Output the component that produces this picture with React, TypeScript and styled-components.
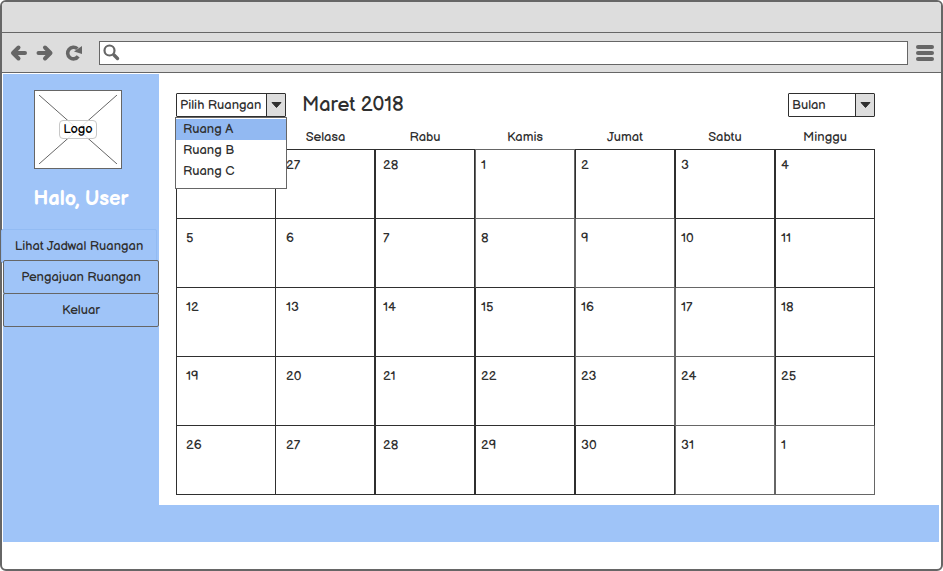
import React, { useState } from "react";
import styled, { createGlobalStyle } from "styled-components";

const ink = "#2f2f2f";
const grey = "#666666";
const blue = "#9fc4f8";
const chrome = "#dddddd";

const GlobalStyle = createGlobalStyle`
  *, *::before, *::after { box-sizing: border-box; }
  body {
    margin: 0;
    background: #fff;
    color: ${ink};
    font-family: "Balsamiq Sans", "Open Sans", sans-serif;
    font-size: 13px;
    line-height: 20px;
  }
  button, input, select { font: inherit; color: inherit; }
`;

const Frame = styled.div`
  display: flex;
  flex-direction: column;
  min-height: 100vh;
  border: 2px solid ${grey};
  border-radius: 6px;
  background: #fff;
`;

const TitleBar = styled.div`
  height: 31px;
  background: ${chrome};
  border-bottom: 1px solid ${grey};
  border-radius: 4px 4px 0 0;
`;

const Toolbar = styled.div`
  display: flex;
  align-items: center;
  height: 40px;
  padding: 0 7px 0 4px;
  background: ${chrome};
  border-bottom: 1px solid ${grey};
`;

const ToolButton = styled.button<{ $width: number }>`
  display: flex;
  align-items: center;
  justify-content: center;
  width: ${(p) => p.$width}px;
  height: 24px;
  padding: 0;
  border: 0;
  background: none;
  color: ${grey};
`;

const AddressBar = styled.label`
  display: flex;
  align-items: center;
  flex: 1;
  height: 24px;
  margin: 0 8px 0 9px;
  padding: 0 3px;
  border: 1px solid ${grey};
  background: #fff;
  color: ${grey};
`;

const AddressInput = styled.input`
  flex: 1;
  min-width: 0;
  padding: 0 6px;
  border: 0;
  outline: 0;
  background: none;
`;

const Page = styled.div`
  padding: 1px 2px 27px 1px;
`;

const Columns = styled.div`
  display: flex;
`;

const Sidebar = styled.aside`
  display: flex;
  flex-direction: column;
  flex: none;
  width: 156px;
  padding-top: 16px;
  background: ${blue};
`;

const LogoBox = styled.div`
  display: grid;
  place-items: center;
  width: 88px;
  height: 79px;
  margin-left: 31px;
  border: 1px solid ${grey};
  background: #fff;
  color: #000;

  > * { grid-area: 1 / 1; }
`;

const LogoLabel = styled.span`
  z-index: 1;
  padding: 0 3px;
  border: 1px solid #c8c8c8;
  border-radius: 4px;
  background: rgba(255, 255, 255, 0.85);
  line-height: 17px;
`;

const Greeting = styled.h2`
  margin: 18px 0;
  color: #fff;
  font-size: 20px;
  font-weight: 700;
  line-height: 24px;
  text-align: center;
`;

const Menu = styled.nav`
  display: flex;
  flex-direction: column;
`;

const MenuButton = styled.button<{ $active?: boolean }>`
  height: 34px;
  margin: ${(p) => (p.$active ? "0 2px -3px -2px" : "0 0 -1px")};
  padding: 0;
  border: 1px solid ${(p) => (p.$active ? "#92bbf3" : grey)};
  border-radius: 2px;
  background: ${blue};
`;

const Main = styled.main`
  flex: 1;
  padding: 19px 64px 10px 17px;
`;

const Heading = styled.header`
  display: flex;
  align-items: center;
  height: 24px;
`;

const Month = styled.h1`
  flex: 1;
  margin: 0 16px;
  font-size: 20px;
  font-weight: 400;
  line-height: 26px;
`;

const Picker = styled.div<{ $width: number }>`
  position: relative;
  width: ${(p) => p.$width}px;
  height: 24px;
`;

const Select = styled.select`
  appearance: none;
  width: 100%;
  height: 24px;
  padding: 0 20px 1px 3px;
  border: 1px solid ${ink};
  border-radius: 1px;
  background: #fff;
`;

const PickerArrow = styled.span`
  position: absolute;
  top: 1px;
  right: 1px;
  bottom: 1px;
  display: flex;
  align-items: center;
  justify-content: center;
  width: 19px;
  border-left: 1px solid ${ink};
  background: ${chrome};
  pointer-events: none;
`;

const Options = styled.ul`
  position: absolute;
  z-index: 2;
  top: 100%;
  left: -1px;
  right: -1px;
  height: 72px;
  margin: 0;
  padding: 1px 0 0;
  border: 1px solid ${grey};
  background: #fff;
  list-style: none;
`;

const Option = styled.li<{ $selected: boolean }>`
  padding: 0 7px 1px;
  background: ${(p) => (p.$selected ? "#92b9f2" : "transparent")};
  cursor: default;
`;

const Calendar = styled.table`
  width: 100%;
  border-spacing: 0;
  table-layout: fixed;
`;

/* The second column shares its left rule with the first, so it is a touch narrower. */
const Weekday = styled.th<{ $shared: boolean }>`
  width: ${(p) => (p.$shared ? "calc(100% / 7 - 1px)" : "auto")};
  width: ${(p) => (p.$shared ? "14.16%" : "auto")};
  height: 32px;
  padding: 8px 0 0;
  font-weight: 400;
  text-align: center;
`;

const Day = styled.td<{ $side: string; $bottom: string; $first: boolean; $column: number }>`
  height: ${(p) => (p.$first ? 70 : 69)}px;
  padding: ${(p) => (p.$first ? 5 : 9)}px 0 0 ${(p) => [9, 10, 7, 5, 5, 5, 5][p.$column]}px;
  border: 1px solid ${(p) => p.$side};
  border-bottom-color: ${(p) => p.$bottom};
  border-top-width: ${(p) => (p.$first ? 1 : 0)}px;
  border-left-width: ${(p) => (p.$column === 1 ? 0 : 1)}px;
  vertical-align: top;
`;

const Footer = styled.footer`
  height: 37px;
  background: ${blue};
`;

const rooms = ["Ruang A", "Ruang B", "Ruang C"];
const weekdays = ["", "Selasa", "Rabu", "Kamis", "Jumat", "Sabtu", "Minggu"];

type CalendarDay = { day: string; soft?: boolean };
const d = (day: string): CalendarDay => ({ day });
const s = (day: string): CalendarDay => ({ day, soft: true });

const weeks: CalendarDay[][] = [
  [d(""), d("27"), d("28"), s("1"), d("2"), d("3"), d("4")],
  [d("5"), d("6"), d("7"), s("8"), s("9"), d("10"), d("11")],
  [d("12"), d("13"), d("14"), d("15"), s("16"), s("17"), d("18")],
  [d("19"), d("20"), d("21"), d("22"), s("23"), s("24"), d("25")],
  [d("26"), d("27"), d("28"), d("29"), d("30"), s("31"), s("1")],
];

const tone = (date: CalendarDay) => (date.soft ? grey : ink);

function ArrowIcon({ forward }: { forward?: boolean }) {
  return (
    <svg width="18" height="18" viewBox="0 0 18 18" fill="none" stroke="currentColor" strokeWidth="4" strokeLinecap="round" strokeLinejoin="round" aria-hidden>
      <path d={forward ? "M9 3.5 14.5 9 9 14.5M13.5 9H2.5" : "M8.5 3.5 3 9l5.5 5.5M4 9h11"} />
    </svg>
  );
}

function ReloadIcon() {
  return (
    <svg width="18" height="18" viewBox="0 0 18 18" aria-hidden>
      <path d="M13.2 12.4A5.800 5.800 0 1 1 12.400 4.800" fill="none" stroke="currentColor" strokeWidth="3.600" />
      <path d="M17 2v8L9 7.500z" fill="currentColor" />
    </svg>
  );
}

function SearchIcon() {
  return (
    <svg width="18" height="18" viewBox="0 0 18 18" fill="none" stroke="currentColor" aria-hidden>
      <circle cx="6.5" cy="6.500" r="5" strokeWidth="2.200" />
      <path d="m11 11 3.500 3.500" strokeWidth="3.400" strokeLinecap="round" />
    </svg>
  );
}

function MenuIcon() {
  return (
    <svg width="18" height="18" viewBox="0 0 18 18" fill="currentColor" aria-hidden>
      <rect y="1" width="18" height="4" rx="2" />
      <rect y="7" width="18" height="4" rx="2" />
      <rect y="13" width="18" height="4" rx="2" />
    </svg>
  );
}

function Arrow() {
  return (
    <PickerArrow>
      <svg width="11" height="6" viewBox="0 0 11 6" aria-hidden>
        <path d="M1 .5h9L5.500 5.500z" fill={ink} stroke={ink} strokeLinejoin="round" />
      </svg>
    </PickerArrow>
  );
}

export default function App() {
  const [room, setRoom] = useState(rooms[0]);

  return (
    <>
      <GlobalStyle />
      <Frame>
        <TitleBar />
        <Toolbar>
          <ToolButton $width={26} aria-label="Kembali"><ArrowIcon /></ToolButton>
          <ToolButton $width={26} aria-label="Maju"><ArrowIcon forward /></ToolButton>
          <ToolButton $width={32} aria-label="Muat ulang"><ReloadIcon /></ToolButton>
          <AddressBar>
            <SearchIcon />
            <AddressInput type="text" aria-label="Alamat" />
          </AddressBar>
          <ToolButton $width={18} aria-label="Menu"><MenuIcon /></ToolButton>
        </Toolbar>
        <Page>
          <Columns>
            <Sidebar>
              <LogoBox>
                <svg width="78" height="69" viewBox="0 0 78 69" stroke={grey} aria-hidden>
                  <path d="M0 0 78 69M78 0 0 69" />
                </svg>
                <LogoLabel>Logo</LogoLabel>
              </LogoBox>
              <Greeting>Halo, User</Greeting>
              <Menu>
                <MenuButton $active>Lihat Jadwal Ruangan</MenuButton>
                <MenuButton>Pengajuan Ruangan</MenuButton>
                <MenuButton>Keluar</MenuButton>
              </Menu>
            </Sidebar>
            <Main>
              <Heading>
                <Picker $width={110}>
                  <Select aria-label="Ruangan">
                    <option>Pilih Ruangan</option>
                  </Select>
                  <Arrow />
                  <Options role="listbox" aria-label="Daftar ruangan">
                    {rooms.map((name) => (
                      <Option
                        key={name}
                        role="option"
                        aria-selected={name === room}
                        $selected={name === room}
                        onClick={() => setRoom(name)}
                      >
                        {name}
                      </Option>
                    ))}
                  </Options>
                </Picker>
                <Month>Maret 2018</Month>
                <Picker $width={87}>
                  <Select aria-label="Tampilan">
                    <option>Bulan</option>
                  </Select>
                  <Arrow />
                </Picker>
              </Heading>
              <Calendar>
                <thead>
                  <tr>
                    {weekdays.map((name, column) => (
                      <Weekday key={name} scope="col" $shared={column === 1}>{name}</Weekday>
                    ))}
                  </tr>
                </thead>
                <tbody>
                  {weeks.map((week, row) => (
                    <tr key={row}>
                      {week.map((date, column) => (
                        <Day
                          key={column}
                          $first={row === 0}
                          $column={column}
                          $side={tone(date)}
                          $bottom={tone(weeks[row + 1]?.[column] ?? date)}
                        >
                          {date.day}
                        </Day>
                      ))}
                    </tr>
                  ))}
                </tbody>
              </Calendar>
            </Main>
          </Columns>
          <Footer />
        </Page>
      </Frame>
    </>
  );
}
